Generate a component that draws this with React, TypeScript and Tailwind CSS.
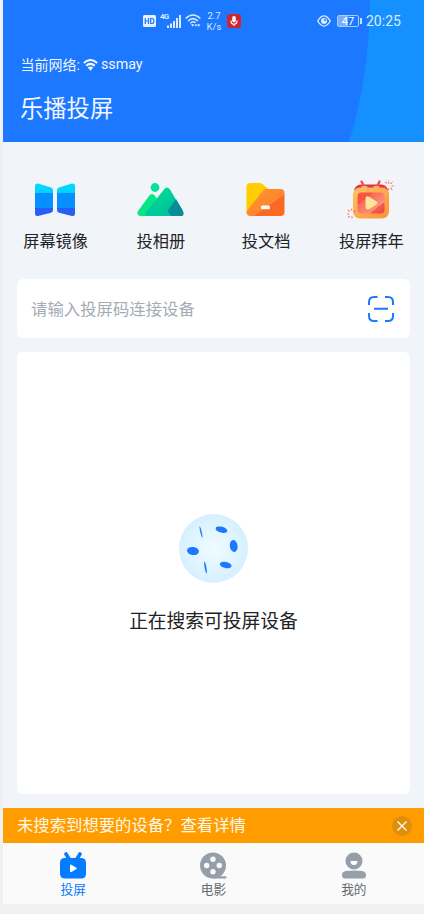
const font = "font-['Roboto','Noto_Sans_CJK_SC',sans-serif]";

const StatusBar = () => (
  <div className="flex h-[42px] items-center pl-[140px] pr-[23px] text-[#dceaff]">
    <svg className="h-3 w-[13px]" viewBox="0 0 13 12">
      <rect width="13" height="12" rx="1.5" fill="#e6f0ff" />
      <path
        d="M2.3 3v6M5.5 3v6M2.3 6h3.2M7.7 3.5v5h1.2q2 0 2-2.5t-2-2.5z"
        fill="none"
        stroke="#1b78ff"
        strokeWidth="1.2"
      />
    </svg>
    <span className="-mt-2 ml-1 w-[9px] whitespace-nowrap text-[8px] font-bold leading-none tracking-[-0.8px]">
      4G
    </span>
    <svg className="-ml-0.5 h-[13px] w-[14px]" viewBox="0 0 14 13">
      <path
        d="M1 13v-2.5M4 13V8.5M7 13V6M10 13V3M13 13V0"
        stroke="currentColor"
        strokeWidth="2"
      />
    </svg>
    <svg className="ml-1 h-[14px] w-4" viewBox="0 0 16 14">
      <g fill="none" stroke="currentColor" strokeWidth="1.5">
        <path d="M.7 4.5Q8-2.5 15.3 4.5M3 7Q8 2.2 13 7M5.3 9.3Q8 6.8 10.5 8.6" />
      </g>
      <path d="M6 10.3h3.4L7.7 12.8zM9.5 12l1.5-2.2 1.5 2.2zM12.3 10.3h3L13.8 13z" fill="currentColor" />
    </svg>
    <div className="ml-[5px] w-4 text-center text-[9.5px] leading-[11px]">
      <div>2.7</div>
      <div className="whitespace-nowrap">K/s</div>
    </div>
    <svg className="ml-[5px] h-[14px] w-[14px]" viewBox="0 0 14 14">
      <rect width="14" height="14" rx="2.5" fill="#cd2630" />
      <rect x="5.2" y="2" width="3.6" height="6.4" rx="1.8" fill="#fff" />
      <path
        d="M4 6.5v.7a3 3 0 0 0 6 0v-.7M7 10v2"
        fill="none"
        stroke="#fff"
        strokeWidth="1.1"
      />
    </svg>
    <div className="ml-auto flex items-center">
      <svg className="h-3 w-[14px]" viewBox="0 0 14 12">
        <path
          d="M.7 6Q7-4.2 13.3 6 7 16.2.7 6z"
          fill="none"
          stroke="currentColor"
          strokeWidth="1.4"
        />
        <circle cx="7" cy="6" r="3" fill="currentColor" />
        <circle cx="8" cy="5" r="1" fill="#1b78ff" />
      </svg>
      <div className="ml-1.5 flex h-3 w-[22px] items-center justify-center rounded-[2px] border border-[#a9ccff] bg-linear-to-r from-[#79aeff] from-50% to-transparent to-50% text-[11px] leading-none text-white">
        47
      </div>
      <div className="ml-px h-1.5 w-0.5 bg-[#c8deff]" />
      <span className="ml-1 w-[35px] whitespace-nowrap text-[14px] leading-none">20:25</span>
    </div>
  </div>
);

const Header = () => (
  <header className="relative h-[142px] shrink-0 overflow-hidden bg-[#1b78ff] text-[#f1f6ff]">
    {/* Lighter area behind the right edge */}
    <svg className="absolute inset-0 h-full w-full" viewBox="0 0 421 142">
      <path d="M367 0Q366 78 346 142H421V0z" fill="#1490ff" />
    </svg>
    <div className="relative">
      <StatusBar />
      <div className="mt-[13px] flex h-5 items-center pl-[17.5px] text-[14px]">
        <span>当前网络:</span>
        <svg className="mx-[3px] h-3 w-[15px]" viewBox="0 0 15 12">
          <path
            d="M.8 4Q7.5-2 14.2 4M3.2 6.8Q7.5 3 11.8 6.8"
            fill="none"
            stroke="currentColor"
            strokeWidth="2"
          />
          <path d="M4.7 8.5Q7.5 6.5 10.3 8.5L7.5 11.7z" fill="currentColor" />
        </svg>
        <span className="text-[14.3px]">ssmay</span>
      </div>
      <h1 className="mt-[18px] pl-[17px] text-[23.3px] leading-8">乐播投屏</h1>
    </div>
  </header>
);

const MirrorIcon = () => (
  <svg className="h-12 w-12" viewBox="0 0 48 48">
    <defs>
      <linearGradient id="mirror" x2="0" y2="1">
        <stop offset="0" stopColor="#00d9ff" />
        <stop offset=".28" stopColor="#00d2ff" />
        <stop offset=".28" stopColor="#078fff" />
        <stop offset=".75" stopColor="#078fff" />
        <stop offset=".75" stopColor="#275ef5" />
        <stop offset="1" stopColor="#275ef5" />
      </linearGradient>
    </defs>
    <path d="M3 10q0-3 3-2.5l13 4q2 .8 2 2.5v20q0 2-2 2.7L6 40q-3 .6-3-2.5z" fill="url(#mirror)" />
    <path d="M43 10q0-3-3-2.5l-13 4q-2 .8-2 2.5v20q0 2 2 2.7L40 40q3 .6 3-2.5z" fill="url(#mirror)" />
  </svg>
);

const AlbumIcon = () => (
  <svg className="h-12 w-12" viewBox="0 0 48 48">
    <defs>
      <linearGradient id="hill" x2="1" y2="1">
        <stop stopColor="#00e491" />
        <stop offset="1" stopColor="#00b69d" />
      </linearGradient>
    </defs>
    <circle cx="18" cy="11.5" r="4.4" fill="#00e49a" />
    <path d="M1 35 12 20q3-4 6 0l12 16q2 4-2 4H4q-5-.5-3-5z" fill="#08e585" />
    <path d="M9 40q-2-1 0-4L27 13.5q3-4 6 0L45 34q3 6-2 6z" fill="url(#hill)" />
    <path d="m30.5 35 8.5-12 6.5 11q3 6-2 6H34z" fill="#078e98" />
    <path d="m21 25 13 15H9q-2-1 0-4z" fill="#00c99d" opacity=".65" />
  </svg>
);

const FolderIcon = () => (
  <svg className="h-12 w-12" viewBox="0 0 48 48">
    <defs>
      <linearGradient id="folder" x2="1" y2="1">
        <stop stopColor="#ff9629" />
        <stop offset=".6" stopColor="#ff8630" />
        <stop offset=".6" stopColor="#f96924" />
        <stop offset="1" stopColor="#ff6b1d" />
      </linearGradient>
    </defs>
    <path d="M4.5 11q0-4 4-4h9q2 0 3 1l6 5h3L15 37H4.5z" fill="#ffcd00" />
    <path d="m5.5 34 16-20q1-1 3-1h14q4 0 4 4v19q0 4-4 4h-30q-4 0-4-4z" fill="url(#folder)" />
    <rect x="19" y="29.5" width="9" height="3.8" rx="1.5" fill="#fff" />
  </svg>
);

const FestiveIcon = () => (
  <svg className="h-12 w-12" viewBox="0 0 48 48">
    <defs>
      <linearGradient id="festive" x2="1" y2="1">
        <stop stopColor="#ffc467" />
        <stop offset="1" stopColor="#ff8f36" />
      </linearGradient>
      <linearGradient id="screen" x2="1" y2="1">
        <stop stopColor="#fc5343" />
        <stop offset=".3" stopColor="#f95442" />
        <stop offset=".3" stopColor="#f96c58" />
        <stop offset=".72" stopColor="#f9907a" />
        <stop offset=".72" stopColor="#f4604e" />
        <stop offset="1" stopColor="#ee4140" />
      </linearGradient>
    </defs>
    <rect x="7" y="8.5" width="34" height="20" rx="7" fill="#e92f42" />
    <path d="m17 10.5-2.5-5m15.5 5 2.5-5" stroke="#f0523f" strokeWidth="2.4" strokeLinecap="round" />
    <path d="M15.5 11h4m8 0h4" stroke="#ffb07a" strokeWidth="2" strokeLinecap="round" />
    <rect x="6" y="11.5" width="36" height="31" rx="7" fill="url(#festive)" />
    <rect x="10.5" y="16.5" width="27" height="21" rx="4" fill="url(#screen)" />
    <path d="M18.5 23q0-4 4-2l7 4.5q2 1.5 0 3L22.5 33q-4 1.5-4-2z" fill="#ffe39c" />
    <g stroke="#ff684a" strokeWidth="1.2" strokeDasharray="1.8 .8">
      <path d="M41.5 7.5V4.5M43.5 8l2-2.5M44.5 10h3M43.5 12l2.3 2M41.5 12.5v2M39.5 7.5 38 5M39 10h-2" />
      <path d="M4.5 34.5V32M2.5 35.5l-2-2M2 38h-2.5M2.5 40 .7 42M5 40.5v2.5M7 36l2-2" />
    </g>
  </svg>
);

const actions = [
  { label: "屏幕镜像", icon: <MirrorIcon /> },
  { label: "投相册", icon: <AlbumIcon /> },
  { label: "投文档", icon: <FolderIcon /> },
  { label: "投屏拜年", icon: <FestiveIcon /> },
];

const SearchGlobe = () => (
  <svg className="h-[70px] w-[70px]" viewBox="0 0 70 70">
    <defs>
      <radialGradient id="globe">
        <stop stopColor="#f0fcff" />
        <stop offset="1" stopColor="#d6f0ff" />
      </radialGradient>
    </defs>
    <circle cx="34.5" cy="34.5" r="34.5" fill="url(#globe)" />
    <g fill="#1b78ff">
      <ellipse cx="42.5" cy="15.7" rx="6" ry="3" transform="rotate(14 42.5 15.7)" />
      <ellipse cx="54.7" cy="32" rx="3.9" ry="6" transform="rotate(-8 54.7 32)" />
      <ellipse cx="14" cy="37" rx="6" ry="4" transform="rotate(8 14 37)" />
      <ellipse cx="46.7" cy="51" rx="6" ry="3" transform="rotate(12 46.7 51)" />
      <ellipse cx="22" cy="18" rx=".7" ry="6" transform="rotate(-13 22 18)" />
      <ellipse cx="26.5" cy="53.5" rx=".9" ry="6" transform="rotate(-10 26.5 53.5)" />
    </g>
  </svg>
);

const CastIcon = () => (
  <svg className="h-7 w-7" viewBox="0 0 28 28">
    <path d="m7 2 3 5m11-5-3 5" stroke="currentColor" strokeWidth="3.6" strokeLinecap="round" />
    <rect x="1" y="6" width="26" height="20.5" rx="4.5" fill="currentColor" />
    <path d="M11 13.5q0-1.5 1.4-.8l5 3q1 .6 0 1.2l-5 3q-1.4.8-1.4-.8z" fill="#fff" />
  </svg>
);

const MovieIcon = () => (
  <svg className="h-7 w-7" viewBox="0 0 28 28">
    <circle cx="14" cy="13.5" r="13" fill="#959ea9" />
    <path d="M14 24.3h12.5q1 0 1 1.1t-1 1.1H14z" fill="#959ea9" />
    <g fill="#fafafa">
      <circle cx="14" cy="7.2" r="2.7" />
      <circle cx="7.7" cy="13.5" r="2.7" />
      <circle cx="20.3" cy="13.5" r="2.7" />
      <circle cx="14" cy="19.8" r="2.7" />
    </g>
  </svg>
);

const ProfileIcon = () => (
  <svg className="h-7 w-7" viewBox="0 0 28 28">
    <circle cx="14" cy="9" r="8.5" fill="#959ea9" />
    <path d="M10.5 9h7q0 4-3.5 4t-3.5-4z" fill="#fff" />
    <path d="M2 23q0-3.5 4-4 8-1 16 0 4 .5 4 4 0 3.5-3 3.5H5q-3 0-3-3.5z" fill="#959ea9" />
  </svg>
);

const tabs = [
  { label: "投屏", icon: <CastIcon />, color: "text-[#057bff]" },
  { label: "电影", icon: <MovieIcon />, color: "text-[#666a6e]" },
  { label: "我的", icon: <ProfileIcon />, color: "text-[#666a6e]" },
];

const App = () => {
  return (
    <div className={`h-[914px] w-[424px] overflow-hidden bg-[#f0f0f0] pl-[3px] ${font}`}>
      <div className="flex h-[904px] flex-col bg-[#f1f5f9]">
        <Header />

        {/* Quick actions */}
        <div className="grid h-[137px] shrink-0 grid-cols-4 pt-[34px]">
          {actions.map((action) => (
            <button key={action.label} className="flex flex-col items-center">
              {action.icon}
              <span className="mt-1.5 text-[16.2px] leading-6 text-[#202225]">
                {action.label}
              </span>
            </button>
          ))}
        </div>

        {/* Cast code */}
        <div className="mx-3.5 flex h-[59px] shrink-0 items-center justify-between rounded-[6px] bg-white pl-[14px] pr-4">
          <span className="pt-[3px] text-[16.4px] text-[#a3abb7]">请输入投屏码连接设备</span>
          <svg className="h-[26px] w-[26px]" viewBox="0 0 26 26">
            <path
              d="M1 9V6q0-5 5-5h3.5M17 1h3q5 0 5 5v3M25 17v3q0 5-5 5h-3M9.5 25H6q-5 0-5-5v-3M6 12.7h14"
              fill="none"
              stroke="#1b7aff"
              strokeWidth="2"
            />
          </svg>
        </div>

        {/* Device list */}
        <main className="mx-3.5 mt-3.5 flex h-[442px] shrink-0 flex-col items-center rounded-[6px] bg-white pt-[162px]">
          <SearchGlobe />
          <p className="mt-6 text-[18.75px] leading-7 text-[#202225]">正在搜索可投屏设备</p>
        </main>

        <div className="mt-3.5 flex h-[35px] shrink-0 items-center justify-between bg-[#ff9d00] pl-3.5 pr-3 text-[16.35px] text-[#fff8e8]">
          <span className="pt-0.5">未搜索到想要的设备？查看详情</span>
          <button className="flex h-5 w-5 items-center justify-center rounded-full bg-[#df8f0b]">
            <svg className="h-2.5 w-2.5" viewBox="0 0 10 10">
              <path d="m.5.5 9 9m0-9-9 9" stroke="#fff" strokeWidth="1.2" />
            </svg>
          </button>
        </div>

        <nav className="grid h-[61px] shrink-0 grid-cols-3 bg-[#fafafa] pt-[9px]">
          {tabs.map((tab) => (
            <button key={tab.label} className={`flex flex-col items-center ${tab.color}`}>
              {tab.icon}
              <span className="mt-px text-[12.7px] leading-[18px]">{tab.label}</span>
            </button>
          ))}
        </nav>
      </div>
    </div>
  );
};

export default App;
